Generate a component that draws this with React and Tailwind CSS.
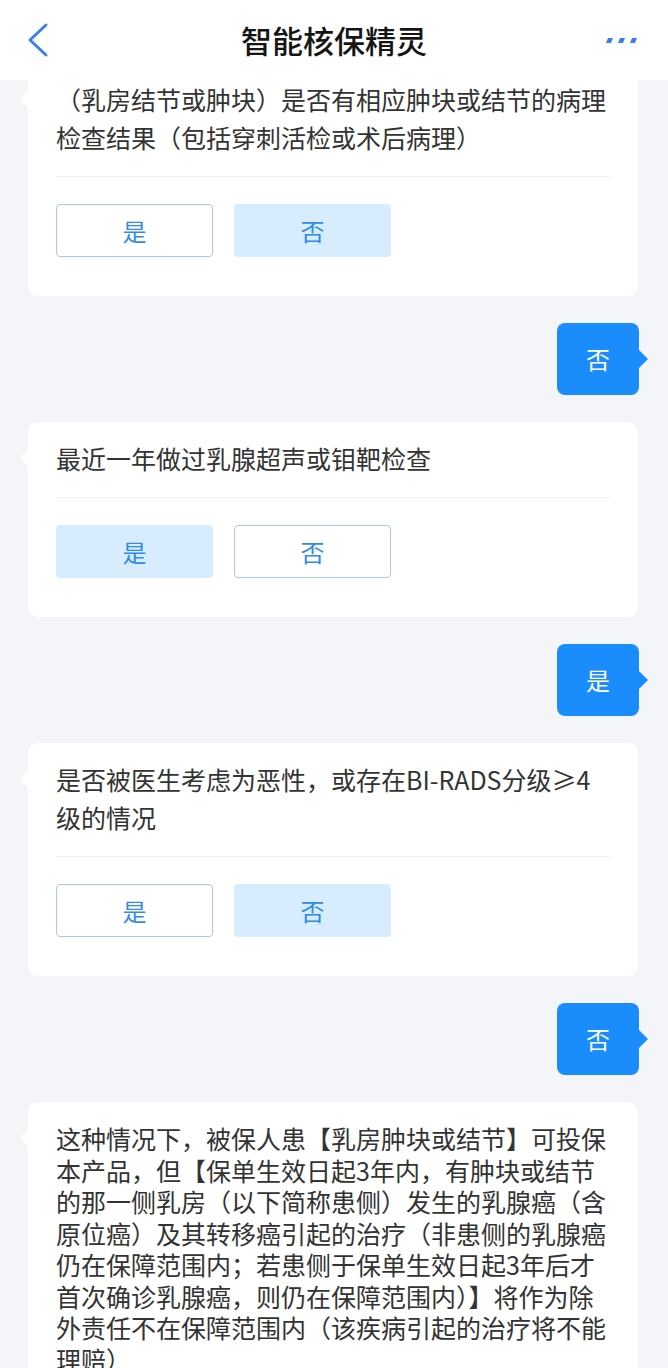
import React from 'react';

const font = { fontFamily: '"Noto Sans CJK SC", "Noto Sans", sans-serif' };

function Question({ lines, selected, first }) {
  return (
    <div className={`relative bg-white rounded-[10px] ml-[28px] mr-[30px] px-[28px] pt-[17px] pb-[39px] ${first ? '-mt-[17px]' : ''}`}>
      <div className="absolute -left-[8px] top-[28px] w-0 h-0 border-y-[8px] border-y-transparent border-r-[8px] border-r-white" />
      <div className="text-[25px] leading-[38px] text-[#333]">
        {lines.map((l, i) => (
          <div key={i} className="whitespace-nowrap">{l}</div>
        ))}
      </div>
      <div className="h-px bg-[#efeff2] mt-[20px]" />
      <div className="flex gap-[21px] mt-[27px]">
        {['是', '否'].map((t) => (
          <div
            key={t}
            className={`w-[157px] h-[53px] rounded-[4px] flex items-center justify-center text-[24px] text-[#2f8be6] ${
              selected === t ? 'bg-[#d7ecfd]' : 'bg-white border border-[#a9c9de]'
            }`}
          >
            {t}
          </div>
        ))}
      </div>
    </div>
  );
}

function Reply({ text }) {
  return (
    <div className="flex justify-end ml-[28px] mr-[29px] my-[27px]">
      <div className="relative w-[82px] h-[72px] rounded-[8px] bg-[#1a8cfb] flex items-center justify-center text-[24px] text-white">
        {text}
        <div className="absolute -right-[9px] top-[27px] w-0 h-0 border-y-[9px] border-y-transparent border-l-[9px] border-l-[#1a8cfb]" />
      </div>
    </div>
  );
}

export default function App() {
  return (
    <div style={font} className="w-[668px] h-[1368px] bg-[#f4f5f9] flex flex-col overflow-hidden">
      <header className="h-[80px] bg-white flex items-center justify-between px-[28px] relative z-10 shrink-0">
        <svg width="24" height="36" viewBox="0 0 24 36" className="-ml-[2px]">
          <path d="M20 3 L4 18 L20 33" fill="none" stroke="#3b7fe8" strokeWidth="3" strokeLinecap="round" strokeLinejoin="round" />
        </svg>
        <div className="absolute left-0 right-0 text-center text-[31px] font-medium text-[#151515] pointer-events-none">
          智能核保精灵
        </div>
        <svg width="34" height="10" viewBox="0 0 34 10" className="mr-[2px]">
          <path d="M2 8 L4 3 L9 3 L7 8 Z" fill="#3b7fe8" />
          <path d="M14 8 L16 3 L21 3 L19 8 Z" fill="#3b7fe8" />
          <path d="M26 8 L28 3 L33 3 L31 8 Z" fill="#3b7fe8" />
        </svg>
      </header>
      <div className="flex-1 overflow-hidden">
        <Question
          first
          lines={['（乳房结节或肿块）是否有相应肿块或结节的病理', '检查结果（包括穿刺活检或术后病理）']}
          selected="否"
        />
        <Reply text="否" />
        <Question lines={['最近一年做过乳腺超声或钼靶检查']} selected="是" />
        <Reply text="是" />
        <Question lines={['是否被医生考虑为恶性，或存在BI-RADS分级≥4', '级的情况']} selected="否" />
        <Reply text="否" />
        <div className="relative bg-white rounded-[10px] ml-[28px] mr-[30px] px-[28px] pt-[21px] pb-[30px]">
          <div className="absolute -left-[8px] top-[28px] w-0 h-0 border-y-[8px] border-y-transparent border-r-[8px] border-r-white" />
          <p className="text-[25px] leading-[31.5px] text-[#333] break-all">
            这种情况下，被保人患【乳房肿块或结节】可投保本产品，但【保单生效日起3年内，有肿块或结节的那一侧乳房（以下简称患侧）发生的乳腺癌（含原位癌）及其转移癌引起的治疗（非患侧的乳腺癌仍在保障范围内；若患侧于保单生效日起3年后才首次确诊乳腺癌，则仍在保障范围内）】将作为除外责任不在保障范围内（该疾病引起的治疗将不能理赔）
          </p>
        </div>
      </div>
    </div>
  );
}
